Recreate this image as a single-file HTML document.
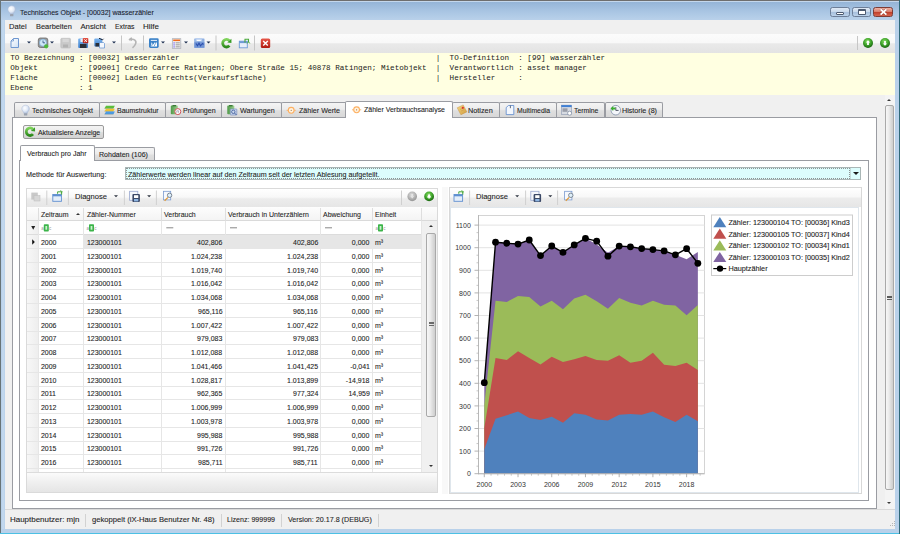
<!DOCTYPE html>
<html><head><meta charset="utf-8"><title>Technisches Objekt</title>
<style>
*{box-sizing:border-box}
html,body{margin:0;padding:0}
body{width:900px;height:534px;overflow:hidden;position:relative;background:#f0f0f0;font-family:"Liberation Sans",sans-serif;color:#1e1e1e}
.a{position:absolute}
.t{position:absolute;white-space:nowrap;line-height:10px;transform-origin:0 0;-webkit-text-stroke:0.1px currentColor}
.tr{transform-origin:100% 0}
.mono{font-family:"Liberation Mono",monospace;-webkit-text-stroke:0}
.tab{position:absolute;height:15px;border:1px solid #9a9ca2;border-bottom:none;border-radius:2px 2px 0 0;background:linear-gradient(#f4f4f4,#ececec 45%,#dfdfdf 55%,#d8d8d8)}
</style></head><body>
<div class="a" style="left:0;top:0;width:900px;height:1px;background:#6e6e6e"></div>
<div class="a" style="left:0;top:0;width:1px;height:534px;background:#687478"></div>
<div class="a" style="left:1px;top:20px;width:4.1px;height:514px;background:linear-gradient(90deg,#b4cde8,#c4daf0 50%,#b9d1ea)"></div>
<div class="a" style="left:894.8px;top:20px;width:3.8px;height:514px;background:#b9d1ea"></div>
<div class="a" style="left:898.5px;top:0;width:0.7px;height:534px;background:#62c6e8"></div>
<div class="a" style="left:899px;top:0;width:1px;height:534px;background:#2f6878"></div>
<div class="a" style="left:1px;top:1px;width:897.5px;height:19px;background:linear-gradient(#93b3d6,#a9c5e3 55%,#b9d1ea)"></div>
<div class="a" style="left:1px;top:1px;width:897.5px;height:1px;background:#c4d7ec"></div>
<div class="a" style="left:1px;top:529.3px;width:897.5px;height:4px;background:#b9d1ea"></div>
<div class="a" style="left:0;top:533px;width:899px;height:1px;background:#4cc0e4"></div>
<svg class="a" style="left:0;top:0" width="30" height="20" viewBox="0 0 30 20"><defs><radialGradient id="tb2" cx="0.4" cy="0.35" r="0.7"><stop offset="0" stop-color="#ffffff"/><stop offset="0.55" stop-color="#e2eaf6"/><stop offset="1" stop-color="#a3b5d4"/></radialGradient></defs><g transform="translate(-13.9,-99.4)"><path d="M25.6 105.2 C28 105.2 29.4 106.9 29.4 108.8 C29.4 110.4 28.2 111.3 27.6 112.4 L27.3 113.5 H23.9 L23.6 112.4 C23 111.3 21.8 110.4 21.8 108.8 C21.8 106.9 23.2 105.2 25.6 105.2 Z" fill="url(#tb2)" stroke="#aebcd6" stroke-width="0.5"/><rect x="23.9" y="113.3" width="3.4" height="2.4" rx="0.6" fill="#9aa2b0"/></g></svg>
<div class="t" style="left:19.80px;top:7.80px;font-size:7.8px;color:#1b2230;transform:scaleX(0.9001)">Technisches Objekt - [00032] wasserzähler</div>
<div class="a" style="left:830px;top:6.7px;width:20px;height:10.6px;border:1px solid #6d7e98;border-radius:2.5px;background:linear-gradient(#dfe9f5,#c9d9ec 45%,#a8c0dd 55%,#bcd2ea)"></div>
<div class="a" style="left:836.3px;top:12.2px;width:7.6px;height:2.8px;background:#fff;border:1px solid #4d5a70;border-radius:1px"></div>
<div class="a" style="left:852.2px;top:6.7px;width:19.2px;height:10.6px;border:1px solid #6d7e98;border-radius:2.5px;background:linear-gradient(#dfe9f5,#c9d9ec 45%,#a8c0dd 55%,#bcd2ea)"></div>
<div class="a" style="left:857.9px;top:9.4px;width:7.8px;height:5.4px;border:1px solid #4d5a70;border-top-width:2px;background:#fff;border-radius:1px"></div>
<div class="a" style="left:873.3px;top:6.7px;width:20px;height:10.6px;border:1px solid #7d3c36;border-radius:2.5px;background:linear-gradient(#eeb1a3,#d9806f 45%,#c2412c 55%,#d66550)"></div>
<svg class="a" style="left:873px;top:6px" width="21" height="12" viewBox="0 0 21 12"><path d="M7.6 3.4 L13.4 8.6 M13.4 3.4 L7.6 8.6" stroke="#6a2a22" stroke-width="3" stroke-opacity="0.45"/><path d="M7.6 3.4 L13.4 8.6 M13.4 3.4 L7.6 8.6" stroke="#fff" stroke-width="1.9"/></svg>
<div class="a" style="left:5px;top:20px;width:890px;height:13.8px;background:#f0f0f0"></div>
<div class="t" style="left:9.40px;top:22.20px;font-size:7.8px;color:#1e1e1e;transform:scaleX(0.9669)">Datei</div>
<div class="t" style="left:35.60px;top:22.20px;font-size:7.8px;color:#1e1e1e;transform:scaleX(0.9491)">Bearbeiten</div>
<div class="t" style="left:80.40px;top:22.20px;font-size:7.8px;color:#1e1e1e">Ansicht</div>
<div class="t" style="left:115.00px;top:22.20px;font-size:7.8px;color:#1e1e1e;transform:scaleX(0.8775)">Extras</div>
<div class="t" style="left:143.00px;top:22.20px;font-size:7.8px;color:#1e1e1e;transform:scaleX(1.0250)">Hilfe</div>
<div class="a" style="left:5px;top:33.8px;width:890px;height:18.9px;background:linear-gradient(#fcfcfc,#f8f8f8 45%,#e9e9e9 52%,#e3e3e3)"></div>
<svg class="a" style="left:0;top:0" width="900" height="534" viewBox="0 0 900 534">
<defs>
<linearGradient id="gdoc" x1="0" y1="0" x2="1" y2="1"><stop offset="0" stop-color="#ffffff"/><stop offset="1" stop-color="#cfe0f5"/></linearGradient>
<linearGradient id="gflop" x1="0" y1="0" x2="0" y2="1"><stop offset="0" stop-color="#7db5ee"/><stop offset="1" stop-color="#3d7fcc"/></linearGradient>
<linearGradient id="ggreen" x1="0" y1="0" x2="0" y2="1"><stop offset="0" stop-color="#7fd35a"/><stop offset="1" stop-color="#2d8a1c"/></linearGradient>
<radialGradient id="gball" cx="0.45" cy="0.35" r="0.6"><stop offset="0" stop-color="#8ee06a"/><stop offset="0.6" stop-color="#3fa52a"/><stop offset="1" stop-color="#1f6e14"/></radialGradient>
<linearGradient id="gred" x1="0" y1="0" x2="0" y2="1"><stop offset="0" stop-color="#e8584a"/><stop offset="1" stop-color="#b01a10"/></linearGradient>
</defs>
<!-- new doc -->
<path d="M13.5 38.5 H18.5 V47.5 H11 V41 Z" fill="url(#gdoc)" stroke="#6f97d0" stroke-width="1"/>
<path d="M13.5 38.5 V41 H11" fill="none" stroke="#6f97d0" stroke-width="0.8"/>
<path d="M27 41.5 h4 l-2 2 z" fill="#1d2f50"/>
<!-- clock -->
<rect x="38.3" y="38" width="9.5" height="9.5" rx="2" fill="#9a9a9a" stroke="#6a6a6a" stroke-width="0.8"/>
<circle cx="43" cy="42.7" r="3.6" fill="#cfe6f7" stroke="#6aa0cc" stroke-width="0.6"/>
<path d="M43 40.5 V42.8 H45" fill="none" stroke="#2a4e80" stroke-width="0.8"/>
<circle cx="46.2" cy="46.3" r="2.1" fill="#4cb83a"/>
<path d="M50 41.5 h4 l-2 2 z" fill="#1d2f50"/>
<!-- gray floppy -->
<rect x="60.8" y="38.3" width="9.7" height="9.7" rx="1" fill="#c9c9c9" stroke="#bdbdbd" stroke-width="0.6"/>
<rect x="62.5" y="39" width="6.3" height="3.2" fill="#d8d8d8"/>
<rect x="63" y="44.5" width="5" height="3" fill="#b3b3b3"/>
<!-- floppy red x -->
<rect x="78.2" y="38.5" width="9.8" height="9.5" rx="1" fill="url(#gflop)"/>
<rect x="80" y="44" width="6.5" height="4" fill="#2a2f38"/>
<rect x="80.5" y="39" width="3" height="3" fill="#e8f2fc"/>
<rect x="82.8" y="38" width="5.5" height="5.3" rx="0.8" fill="url(#gred)"/>
<path d="M84.2 39.4 L87 42 M87 39.4 L84.2 42" stroke="#fff" stroke-width="0.9"/>
<!-- floppy multiple -->
<rect x="94.3" y="38.5" width="8" height="8" rx="1" fill="url(#gflop)"/>
<rect x="95.5" y="43" width="5" height="3.5" fill="#2a2f38"/>
<path d="M99 38.3 l3.5 1.5 l1 -1" fill="none" stroke="#1d2333" stroke-width="1"/>
<path d="M99.5 42.5 H103.5 L104.5 43.5 V48 H99.5 Z" fill="#f4f8fd" stroke="#5f8fcf" stroke-width="0.7"/>
<path d="M112 41.5 h4 l-2 2 z" fill="#1d2f50"/>
<line x1="121.5" y1="35.5" x2="121.5" y2="50.5" stroke="#c6c6c6" stroke-width="1"/>
<!-- undo gray -->
<path d="M129 40 L131 38.5 L131.5 41 M130.2 39.6 C134 38.5 137 40.5 135.5 44 C134.8 45.8 133.5 47 132.5 47.8" fill="none" stroke="#b5b5b5" stroke-width="1.6"/>
<line x1="143.5" y1="35.5" x2="143.5" y2="50.5" stroke="#c6c6c6" stroke-width="1"/>
<!-- chart icon -->
<rect x="149" y="38.3" width="9.7" height="9.7" rx="1.4" fill="#3b82c8"/>
<rect x="150.8" y="39.9" width="6.2" height="0.9" fill="#ffffff"/>
<path d="M150.7 46.4 L151.6 42.3 L153.2 44.6 L154.8 42.3 L156.1 43.6 L157 41.6 V46.4 Z" fill="#ffffff"/>
<path d="M151.5 46.2 L152.9 43.2 M154.2 46.2 L155.5 43.2" stroke="#3b82c8" stroke-width="0.7"/>
<path d="M161 41.5 h4 l-2 2 z" fill="#1d2f50"/>
<!-- list icon -->
<rect x="172.3" y="38.7" width="8.5" height="9.6" fill="#f3f3f3" stroke="#a5a8b0" stroke-width="0.7"/>
<rect x="173.2" y="39.5" width="6.8" height="1.6" fill="#f06a1c"/>
<rect x="173.3" y="42.3" width="1.6" height="1.2" fill="#8a7ef0"/><rect x="175.6" y="42.4" width="4.2" height="0.9" fill="#8f8f8f"/>
<rect x="173.3" y="44.3" width="1.6" height="1.2" fill="#8a7ef0"/><rect x="175.6" y="44.4" width="4.2" height="0.9" fill="#8f8f8f"/>
<rect x="173.3" y="46.3" width="1.6" height="1.2" fill="#8a7ef0"/><rect x="175.6" y="46.4" width="4.2" height="0.9" fill="#8f8f8f"/>
<path d="M184 41.5 h4 l-2 2 z" fill="#1d2f50"/>
<!-- printer/report icon -->
<rect x="194.2" y="38.4" width="10.3" height="9.5" rx="0.6" fill="#8fb0e2"/>
<rect x="195.6" y="38.2" width="6.5" height="3" fill="#b9cff0"/>
<rect x="196.8" y="39.8" width="4" height="1.1" fill="#ffffff"/>
<rect x="194.4" y="42.2" width="10" height="5.5" fill="#6f93d4"/>
<path d="M196 43.5 L197.5 45.8 L199 43.2 L200.5 45.8 L202.5 43.5 L203.5 44.5" fill="none" stroke="#2c4fae" stroke-width="1.1"/>
<path d="M206.5 41.5 h4 l-2 2 z" fill="#1d2f50"/>
<line x1="216" y1="35.5" x2="216" y2="50.5" stroke="#c6c6c6" stroke-width="1"/>
<!-- refresh -->
<path d="M229.41 45.64 A3.8 3.8 0 1 1 229.32 40.66" fill="none" stroke="url(#ggreen)" stroke-width="2.8"/><path d="M231.40 38.78 L231.47 43.04 L227.24 42.53 Z" fill="#3a9e28"/>
<!-- window icon -->
<rect x="239.3" y="41.2" width="8" height="6.6" fill="#e6eefa" stroke="#6e9ad6" stroke-width="0.9"/>
<rect x="239.3" y="41.2" width="8" height="1.9" fill="#6e9ad6"/>
<path d="M245 42.4 V39.2 H248.5 V42.2" fill="none" stroke="#48a83a" stroke-width="1.1"/>
<path d="M247.2 43.5 L248.5 41.6 L249.8 43.5" fill="none" stroke="#48a83a" stroke-width="0.9"/>
<line x1="254.5" y1="35.5" x2="254.5" y2="50.5" stroke="#c6c6c6" stroke-width="1"/>
<!-- red x -->
<rect x="260.8" y="38.4" width="9.4" height="9.6" rx="1.5" fill="url(#gred)"/>
<path d="M263.2 40.9 L267.8 45.5 M267.8 40.9 L263.2 45.5" stroke="#fff" stroke-width="1.4"/>
<!-- right -->
<line x1="857.5" y1="36" x2="857.5" y2="50" stroke="#c6c6c6" stroke-width="1"/>
<circle cx="868" cy="43" r="5" fill="url(#gball)"/>
<path d="M868 40.3 L870.2 42.6 H868.9 V45 H867.1 V42.6 H865.8 Z" fill="#fff"/>
<circle cx="885" cy="43" r="5" fill="url(#gball)"/>
<path d="M885 45.7 L887.2 43.4 H885.9 V41 H884.1 V43.4 H882.8 Z" fill="#fff"/>
</svg>
<div class="a" style="left:5px;top:52.7px;width:889.8px;height:42.3px;background:#ffffe1"></div>
<div class="t mono" style="left:10.30px;top:53.20px;font-size:7.645px;color:#1a1a1a">TO Bezeichnung : [00032] wasserzähler                                                        |  TO-Definition  : [99] wasserzähler</div>
<div class="t mono" style="left:10.30px;top:63.15px;font-size:7.645px;color:#1a1a1a">Objekt         : [99001] Credo Carree Ratingen; Obere Straße 15; 40878 Ratingen; Mietobjekt  |  Verantwortlich : asset manager</div>
<div class="t mono" style="left:10.30px;top:73.10px;font-size:7.645px;color:#1a1a1a">Fläche         : [00002] Laden EG rechts(Verkaufsfläche)                                     |  Hersteller     :</div>
<div class="t mono" style="left:10.30px;top:83.05px;font-size:7.645px;color:#1a1a1a">Ebene          : 1</div>
<div class="a" style="left:5px;top:95px;width:890px;height:414.5px;background:#f0f0f0"></div>
<div class="a" style="left:884.7px;top:94.5px;width:10.3px;height:414.5px;background:#f4f4f4"></div>
<div class="a" style="left:884.7px;top:105.4px;width:9.6px;height:384.5px;border:1px solid #a9a9a9;border-radius:2px;background:linear-gradient(90deg,#f7f7f7,#ececec 40%,#d9d9d9 75%,#cecece)"></div>
<div class="a" style="left:887.2px;top:98.6px;width:0;height:0;border-left:2.6px solid transparent;border-right:2.6px solid transparent;border-bottom:2.6px solid #3a3a3a"></div>
<div class="a" style="left:887.2px;top:502.4px;width:0;height:0;border-left:2.6px solid transparent;border-right:2.6px solid transparent;border-top:2.6px solid #3a3a3a"></div>
<div class="a" style="left:887.2px;top:295.6px;width:4.5px;height:1px;background:#5a5a5a"></div>
<div class="a" style="left:887.2px;top:297.4px;width:4.5px;height:1px;background:#5a5a5a"></div>
<div class="a" style="left:887.2px;top:299.2px;width:4.5px;height:1px;background:#5a5a5a"></div>
<div class="tab" style="left:14.4px;top:102.3px;width:85.5px"></div>
<div class="tab" style="left:98.9px;top:102.3px;width:67.4px"></div>
<div class="tab" style="left:165.3px;top:102.3px;width:57.0px"></div>
<div class="tab" style="left:221.3px;top:102.3px;width:60.9px"></div>
<div class="tab" style="left:281.2px;top:102.3px;width:65.4px"></div>
<div class="tab" style="left:452.4px;top:102.3px;width:47.5px"></div>
<div class="tab" style="left:498.9px;top:102.3px;width:57.7px"></div>
<div class="tab" style="left:555.6px;top:102.3px;width:49.9px"></div>
<div class="tab" style="left:604.5px;top:102.3px;width:58.7px"></div>
<div class="t" style="left:32.20px;top:105.60px;font-size:7.8px;color:#1e1e1e;transform:scaleX(0.9022)">Technisches Objekt</div>
<div class="t" style="left:116.70px;top:105.60px;font-size:7.8px;color:#1e1e1e;transform:scaleX(0.8992)">Baumstruktur</div>
<div class="t" style="left:182.80px;top:105.60px;font-size:7.8px;color:#1e1e1e;transform:scaleX(0.9087)">Prüfungen</div>
<div class="t" style="left:240.00px;top:105.60px;font-size:7.8px;color:#1e1e1e;transform:scaleX(0.9165)">Wartungen</div>
<div class="t" style="left:299.00px;top:105.60px;font-size:7.8px;color:#1e1e1e;transform:scaleX(0.9127)">Zähler Werte</div>
<div class="t" style="left:468.30px;top:105.60px;font-size:7.8px;color:#1e1e1e;transform:scaleX(0.9343)">Notizen</div>
<div class="t" style="left:516.50px;top:105.60px;font-size:7.8px;color:#1e1e1e;transform:scaleX(0.8753)">Multimedia</div>
<div class="t" style="left:573.60px;top:105.60px;font-size:7.8px;color:#1e1e1e;transform:scaleX(0.8798)">Termine</div>
<div class="t" style="left:622.00px;top:105.60px;font-size:7.8px;color:#1e1e1e;transform:scaleX(0.9180)">Historie (8)</div>
<div class="a" style="left:12px;top:117.3px;width:864.8px;height:391.7px;background:#fff;border:1px solid #9a9ca2"></div>
<div class="a" style="left:345px;top:101.3px;width:108.4px;height:17.2px;background:#fff;border:1px solid #9a9ca2;border-bottom:none;border-radius:2px 2px 0 0"></div>
<div class="t" style="left:364.00px;top:105.40px;font-size:7.8px;color:#1e1e1e;transform:scaleX(0.8941)">Zähler Verbrauchsanalyse</div>
<svg class="a" style="left:0;top:0" width="900" height="534" viewBox="0 0 900 534">
<defs>
<radialGradient id="tbulb" cx="0.4" cy="0.35" r="0.7"><stop offset="0" stop-color="#ffffff"/><stop offset="0.55" stop-color="#dfe8f6"/><stop offset="1" stop-color="#9fb2d2"/></radialGradient>
<linearGradient id="tclip" x1="0" y1="0" x2="1" y2="0"><stop offset="0" stop-color="#4f9a48"/><stop offset="1" stop-color="#9ed08f"/></linearGradient>
<linearGradient id="tnote" x1="0" y1="0" x2="1" y2="1"><stop offset="0" stop-color="#f6dc8a"/><stop offset="1" stop-color="#d09a3a"/></linearGradient>
</defs>
<!-- bulb -->
<path d="M25.6 105.2 C28 105.2 29.4 106.9 29.4 108.8 C29.4 110.4 28.2 111.3 27.6 112.4 L27.3 113.5 H23.9 L23.6 112.4 C23 111.3 21.8 110.4 21.8 108.8 C21.8 106.9 23.2 105.2 25.6 105.2 Z" fill="url(#tbulb)" stroke="#aebcd6" stroke-width="0.5"/>
<rect x="23.9" y="113.3" width="3.4" height="2.2" rx="0.6" fill="#9aa2b0"/>
<!-- layers -->
<path d="M106 105.8 H114.9 L113.4 108.4 H104.5 Z" fill="#5cbf3c"/>
<path d="M106 108.7 H114.9 L113.4 111.3 H104.5 Z" fill="#f3c433"/>
<path d="M106 111.6 H114.9 L113.4 114.2 H104.5 Z" fill="#4a9be6"/>
<path d="M104.5 108.4 H113.4 M104.5 111.3 H113.4 M104.5 114.2 H113.4" stroke="#6c7a5a" stroke-width="0.3"/>
<!-- pruefungen -->
<rect x="170.8" y="105.6" width="7" height="8.6" rx="0.8" fill="url(#tclip)"/>
<rect x="172.5" y="105" width="3.6" height="1.4" fill="#3d7a38"/>
<circle cx="177.8" cy="111.6" r="3" fill="#fff" stroke="#d0545a" stroke-width="1"/>
<path d="M176.8 112.8 V110.8 H178.6 V112.8" fill="none" stroke="#6a6a8a" stroke-width="0.5"/>
<!-- wartungen -->
<rect x="227.3" y="105.6" width="7" height="8.6" rx="0.8" fill="url(#tclip)"/>
<rect x="229" y="105" width="3.6" height="1.4" fill="#3d7a38"/>
<rect x="230.3" y="109" width="6.5" height="6" rx="0.5" fill="#c9d6ec" stroke="#6a82b8" stroke-width="0.6"/>
<circle cx="233.3" cy="111.8" r="1.7" fill="none" stroke="#3c5a98" stroke-width="0.8"/>
<line x1="234.5" y1="113" x2="236.5" y2="115" stroke="#3c5a98" stroke-width="0.9"/>
<!-- zaehler werte -->
<circle cx="291.2" cy="110.3" r="2.9" fill="#fff3e0" stroke="#fdb062" stroke-width="1.1"/>
<circle cx="291.2" cy="110.3" r="0.6" fill="#a07040"/>
<line x1="286.6" y1="110.3" x2="288.2" y2="110.3" stroke="#fdb062" stroke-width="0.9"/>
<line x1="294.2" y1="110.3" x2="295.8" y2="110.3" stroke="#fdb062" stroke-width="0.9"/>
<!-- verbrauchsanalyse -->
<circle cx="356.6" cy="109.8" r="2.9" fill="#fff3e0" stroke="#fdb062" stroke-width="1.1"/>
<circle cx="356.6" cy="109.8" r="0.6" fill="#a07040"/>
<line x1="352" y1="109.8" x2="353.6" y2="109.8" stroke="#fdb062" stroke-width="0.9"/>
<line x1="359.6" y1="109.8" x2="361.2" y2="109.8" stroke="#fdb062" stroke-width="0.9"/>
<!-- notizen -->
<path d="M457.2 107.8 L463.2 104.9 L466.9 111.9 L460.9 114.8 Z" fill="url(#tnote)" stroke="#c08838" stroke-width="0.4"/>
<path d="M460 109.5 L463.5 107.8 M460.8 111.2 L464.3 109.5" stroke="#c89040" stroke-width="0.5"/>
<circle cx="462.8" cy="107.8" r="1.1" fill="#e0302a"/>
<!-- multimedia -->
<path d="M506.2 107.5 L508.5 105.5 H513.8 V114.6 H506.2 Z" fill="#f3f7fd" stroke="#5a88cc" stroke-width="0.8"/>
<path d="M510.4 105.6 V108.2" stroke="#404a5a" stroke-width="0.8"/>
<!-- termine -->
<rect x="561.3" y="105.1" width="10.3" height="9.6" fill="#d7dbe2" stroke="#7c8aa6" stroke-width="0.5"/>
<rect x="561.3" y="105.1" width="10.3" height="2" fill="#3f7fd4"/>
<rect x="562.5" y="108.3" width="5" height="3.5" fill="#9a9ea8"/>
<circle cx="569.6" cy="113.2" r="2" fill="#fff" stroke="#6a7890" stroke-width="0.6"/>
<!-- historie -->
<circle cx="615.8" cy="110.2" r="4.8" fill="#f4f6fa" stroke="#8290a8" stroke-width="0.8"/>
<path d="M615.8 107.2 V110.4 H618.6" fill="none" stroke="#2a3444" stroke-width="0.8"/>
<path d="M610.6 108.6 L613.2 106 L613.2 107.5 L615.4 107.5 L615.4 109.6 L613.2 109.6 L613.2 111.1 Z" fill="#3bb02e"/>
</svg>

<div class="a" style="left:22.8px;top:124.9px;width:80.8px;height:13.9px;border:1px solid #9a9a9a;border-radius:2px;background:linear-gradient(#f3f3f3,#ebebeb 45%,#dddddd 55%,#d2d2d2)"></div>
<div class="t" style="left:37.80px;top:127.70px;font-size:7.8px;color:#1e1e1e;transform:scaleX(0.8858)">Aktualisiere Anzeige</div>
<div class="tab" style="left:94.3px;top:147.2px;width:61px;height:14px"></div>
<div class="t" style="left:99.00px;top:150.30px;font-size:7.8px;color:#1e1e1e;transform:scaleX(0.9024)">Rohdaten (106)</div>
<div class="a" style="left:19px;top:160px;width:849.7px;height:341.2px;border:1px solid #9a9ca2;background:#fff"></div>
<div class="a" style="left:20.1px;top:145.3px;width:74.5px;height:15.5px;border:1px solid #9a9ca2;border-bottom:none;border-radius:2px 2px 0 0;background:#fff"></div>
<div class="t" style="left:27.20px;top:149.30px;font-size:7.8px;color:#1e1e1e;transform:scaleX(0.8973)">Verbrauch pro Jahr</div>
<div class="t" style="left:25.70px;top:169.50px;font-size:7.8px;color:#1e1e1e;transform:scaleX(0.9275)">Methode für Auswertung:</div>
<div class="a" style="left:125px;top:167.2px;width:736.3px;height:13px;background:#dcfdfd;border:1px solid #a9b6b6"></div>
<div class="a" style="left:126.2px;top:168.4px;width:723.4px;height:10.6px;border:1px dotted #8c9494"></div>
<div class="a" style="left:849.6px;top:168.2px;width:10.8px;height:11px;background:#dcfdfd;border-left:1px solid #c5dada"></div>
<div class="a" style="left:853.4px;top:172.4px;width:0;height:0;border-left:3px solid transparent;border-right:3px solid transparent;border-top:3px solid #1a1a1a"></div>
<div class="t" style="left:127.50px;top:169.60px;font-size:7.8px;color:#1e1e1e;transform:scaleX(0.9163)">Zählerwerte werden linear auf den Zeitraum seit der letzten Ablesung aufgeteilt.</div>
<div class="a" style="left:26.1px;top:188.2px;width:411.8px;height:304.6px;border:1px solid #dadada;background:#fff"></div>
<div class="a" style="left:27.1px;top:189.2px;width:410.3px;height:18px;background:linear-gradient(#ffffff,#f8f8f8 45%,#ececec 55%,#e6e6e6)"></div>
<div class="t" style="left:74.70px;top:192.00px;font-size:7.8px;color:#1e1e1e;transform:scaleX(0.9711)">Diagnose</div>
<div class="a" style="left:27.1px;top:207.2px;width:410.3px;height:14px;background:linear-gradient(#fdfdfd,#f4f4f4);border-bottom:1px solid #dadada"></div>
<div class="a" style="left:38px;top:207.5px;width:1px;height:13.7px;background:#dedede"></div>
<div class="a" style="left:83px;top:207.5px;width:1px;height:13.7px;background:#dedede"></div>
<div class="a" style="left:161px;top:207.5px;width:1px;height:13.7px;background:#dedede"></div>
<div class="a" style="left:225px;top:207.5px;width:1px;height:13.7px;background:#dedede"></div>
<div class="a" style="left:320px;top:207.5px;width:1px;height:13.7px;background:#dedede"></div>
<div class="a" style="left:372px;top:207.5px;width:1px;height:13.7px;background:#dedede"></div>
<div class="a" style="left:421px;top:207.5px;width:1px;height:13.7px;background:#dedede"></div>
<div class="t" style="left:40.80px;top:209.80px;font-size:8.1px;color:#1e1e1e;transform:scaleX(0.8600)">Zeitraum</div>
<div class="t" style="left:86.50px;top:209.80px;font-size:8.1px;color:#1e1e1e;transform:scaleX(0.8600)">Zähler-Nummer</div>
<div class="t" style="left:164.00px;top:209.80px;font-size:8.1px;color:#1e1e1e;transform:scaleX(0.8600)">Verbrauch</div>
<div class="t" style="left:227.80px;top:209.80px;font-size:8.1px;color:#1e1e1e;transform:scaleX(0.8600)">Verbrauch in Unterzählern</div>
<div class="t" style="left:323.30px;top:209.80px;font-size:8.1px;color:#1e1e1e;transform:scaleX(0.8600)">Abweichung</div>
<div class="t" style="left:375.10px;top:209.80px;font-size:8.1px;color:#1e1e1e;transform:scaleX(0.8600)">Einheit</div>
<div class="a" style="left:76px;top:212.8px;width:0;height:0;border-left:2.2px solid transparent;border-right:2.2px solid transparent;border-bottom:2.2px solid #333"></div>
<div class="a" style="left:27.1px;top:221.2px;width:11.3px;height:251px;background:linear-gradient(90deg,#f7f7f7,#eeeeee)"></div>
<div class="a" style="left:27.1px;top:234.3px;width:396px;height:1px;background:#dcdcdc"></div>
<div class="a" style="left:84px;top:235.30px;width:338px;height:12.76px;background:#e6e6e6"></div>
<div class="a" style="left:27.1px;top:248.06px;width:396px;height:1px;background:#e6e6e6"></div>
<div class="a" style="left:27.1px;top:261.82px;width:396px;height:1px;background:#e6e6e6"></div>
<div class="a" style="left:27.1px;top:275.58px;width:396px;height:1px;background:#e6e6e6"></div>
<div class="a" style="left:27.1px;top:289.34px;width:396px;height:1px;background:#e6e6e6"></div>
<div class="a" style="left:27.1px;top:303.10px;width:396px;height:1px;background:#e6e6e6"></div>
<div class="a" style="left:27.1px;top:316.86px;width:396px;height:1px;background:#e6e6e6"></div>
<div class="a" style="left:27.1px;top:330.62px;width:396px;height:1px;background:#e6e6e6"></div>
<div class="a" style="left:27.1px;top:344.38px;width:396px;height:1px;background:#e6e6e6"></div>
<div class="a" style="left:27.1px;top:358.14px;width:396px;height:1px;background:#e6e6e6"></div>
<div class="a" style="left:27.1px;top:371.90px;width:396px;height:1px;background:#e6e6e6"></div>
<div class="a" style="left:27.1px;top:385.66px;width:396px;height:1px;background:#e6e6e6"></div>
<div class="a" style="left:27.1px;top:399.42px;width:396px;height:1px;background:#e6e6e6"></div>
<div class="a" style="left:27.1px;top:413.18px;width:396px;height:1px;background:#e6e6e6"></div>
<div class="a" style="left:27.1px;top:426.94px;width:396px;height:1px;background:#e6e6e6"></div>
<div class="a" style="left:27.1px;top:440.70px;width:396px;height:1px;background:#e6e6e6"></div>
<div class="a" style="left:27.1px;top:454.46px;width:396px;height:1px;background:#e6e6e6"></div>
<div class="a" style="left:27.1px;top:468.22px;width:396px;height:1px;background:#e6e6e6"></div>
<div class="a" style="left:27.1px;top:481.98px;width:396px;height:1px;background:#e6e6e6"></div>
<div class="a" style="left:38px;top:221.2px;width:1px;height:251px;background:#e6e6e6"></div>
<div class="a" style="left:83px;top:221.2px;width:1px;height:251px;background:#e6e6e6"></div>
<div class="a" style="left:161px;top:221.2px;width:1px;height:251px;background:#e6e6e6"></div>
<div class="a" style="left:225px;top:221.2px;width:1px;height:251px;background:#e6e6e6"></div>
<div class="a" style="left:320px;top:221.2px;width:1px;height:251px;background:#e6e6e6"></div>
<div class="a" style="left:372px;top:221.2px;width:1px;height:251px;background:#e6e6e6"></div>
<div class="a" style="left:421px;top:221.2px;width:1px;height:251px;background:#e6e6e6"></div>
<div class="t" style="left:40.80px;top:238.00px;font-size:8.1px;color:#1e1e1e;transform:scaleX(0.8600)">2000</div>
<div class="t" style="left:87.20px;top:238.00px;font-size:8.1px;color:#1e1e1e;transform:scaleX(0.8600)">123000101</div>
<div class="t tr" style="left:193.03px;top:238.00px;font-size:8.1px;color:#1e1e1e;transform:scaleX(0.8600)">402,806</div>
<div class="t tr" style="left:288.53px;top:238.00px;font-size:8.1px;color:#1e1e1e;transform:scaleX(0.8600)">402,806</div>
<div class="t tr" style="left:349.33px;top:238.00px;font-size:8.1px;color:#1e1e1e;transform:scaleX(0.8600)">0,000</div>
<div class="t" style="left:375.10px;top:238.00px;font-size:8.1px;color:#1e1e1e;transform:scaleX(0.8600)">m³</div>
<div class="t" style="left:40.80px;top:251.76px;font-size:8.1px;color:#1e1e1e;transform:scaleX(0.8600)">2001</div>
<div class="t" style="left:87.20px;top:251.76px;font-size:8.1px;color:#1e1e1e;transform:scaleX(0.8600)">123000101</div>
<div class="t tr" style="left:186.28px;top:251.76px;font-size:8.1px;color:#1e1e1e;transform:scaleX(0.8600)">1.024,238</div>
<div class="t tr" style="left:281.78px;top:251.76px;font-size:8.1px;color:#1e1e1e;transform:scaleX(0.8600)">1.024,238</div>
<div class="t tr" style="left:349.33px;top:251.76px;font-size:8.1px;color:#1e1e1e;transform:scaleX(0.8600)">0,000</div>
<div class="t" style="left:375.10px;top:251.76px;font-size:8.1px;color:#1e1e1e;transform:scaleX(0.8600)">m³</div>
<div class="t" style="left:40.80px;top:265.52px;font-size:8.1px;color:#1e1e1e;transform:scaleX(0.8600)">2002</div>
<div class="t" style="left:87.20px;top:265.52px;font-size:8.1px;color:#1e1e1e;transform:scaleX(0.8600)">123000101</div>
<div class="t tr" style="left:186.28px;top:265.52px;font-size:8.1px;color:#1e1e1e;transform:scaleX(0.8600)">1.019,740</div>
<div class="t tr" style="left:281.78px;top:265.52px;font-size:8.1px;color:#1e1e1e;transform:scaleX(0.8600)">1.019,740</div>
<div class="t tr" style="left:349.33px;top:265.52px;font-size:8.1px;color:#1e1e1e;transform:scaleX(0.8600)">0,000</div>
<div class="t" style="left:375.10px;top:265.52px;font-size:8.1px;color:#1e1e1e;transform:scaleX(0.8600)">m³</div>
<div class="t" style="left:40.80px;top:279.28px;font-size:8.1px;color:#1e1e1e;transform:scaleX(0.8600)">2003</div>
<div class="t" style="left:87.20px;top:279.28px;font-size:8.1px;color:#1e1e1e;transform:scaleX(0.8600)">123000101</div>
<div class="t tr" style="left:186.28px;top:279.28px;font-size:8.1px;color:#1e1e1e;transform:scaleX(0.8600)">1.016,042</div>
<div class="t tr" style="left:281.78px;top:279.28px;font-size:8.1px;color:#1e1e1e;transform:scaleX(0.8600)">1.016,042</div>
<div class="t tr" style="left:349.33px;top:279.28px;font-size:8.1px;color:#1e1e1e;transform:scaleX(0.8600)">0,000</div>
<div class="t" style="left:375.10px;top:279.28px;font-size:8.1px;color:#1e1e1e;transform:scaleX(0.8600)">m³</div>
<div class="t" style="left:40.80px;top:293.04px;font-size:8.1px;color:#1e1e1e;transform:scaleX(0.8600)">2004</div>
<div class="t" style="left:87.20px;top:293.04px;font-size:8.1px;color:#1e1e1e;transform:scaleX(0.8600)">123000101</div>
<div class="t tr" style="left:186.28px;top:293.04px;font-size:8.1px;color:#1e1e1e;transform:scaleX(0.8600)">1.034,068</div>
<div class="t tr" style="left:281.78px;top:293.04px;font-size:8.1px;color:#1e1e1e;transform:scaleX(0.8600)">1.034,068</div>
<div class="t tr" style="left:349.33px;top:293.04px;font-size:8.1px;color:#1e1e1e;transform:scaleX(0.8600)">0,000</div>
<div class="t" style="left:375.10px;top:293.04px;font-size:8.1px;color:#1e1e1e;transform:scaleX(0.8600)">m³</div>
<div class="t" style="left:40.80px;top:306.80px;font-size:8.1px;color:#1e1e1e;transform:scaleX(0.8600)">2005</div>
<div class="t" style="left:87.20px;top:306.80px;font-size:8.1px;color:#1e1e1e;transform:scaleX(0.8600)">123000101</div>
<div class="t tr" style="left:193.64px;top:306.80px;font-size:8.1px;color:#1e1e1e;transform:scaleX(0.8600)">965,116</div>
<div class="t tr" style="left:289.14px;top:306.80px;font-size:8.1px;color:#1e1e1e;transform:scaleX(0.8600)">965,116</div>
<div class="t tr" style="left:349.33px;top:306.80px;font-size:8.1px;color:#1e1e1e;transform:scaleX(0.8600)">0,000</div>
<div class="t" style="left:375.10px;top:306.80px;font-size:8.1px;color:#1e1e1e;transform:scaleX(0.8600)">m³</div>
<div class="t" style="left:40.80px;top:320.56px;font-size:8.1px;color:#1e1e1e;transform:scaleX(0.8600)">2006</div>
<div class="t" style="left:87.20px;top:320.56px;font-size:8.1px;color:#1e1e1e;transform:scaleX(0.8600)">123000101</div>
<div class="t tr" style="left:186.28px;top:320.56px;font-size:8.1px;color:#1e1e1e;transform:scaleX(0.8600)">1.007,422</div>
<div class="t tr" style="left:281.78px;top:320.56px;font-size:8.1px;color:#1e1e1e;transform:scaleX(0.8600)">1.007,422</div>
<div class="t tr" style="left:349.33px;top:320.56px;font-size:8.1px;color:#1e1e1e;transform:scaleX(0.8600)">0,000</div>
<div class="t" style="left:375.10px;top:320.56px;font-size:8.1px;color:#1e1e1e;transform:scaleX(0.8600)">m³</div>
<div class="t" style="left:40.80px;top:334.32px;font-size:8.1px;color:#1e1e1e;transform:scaleX(0.8600)">2007</div>
<div class="t" style="left:87.20px;top:334.32px;font-size:8.1px;color:#1e1e1e;transform:scaleX(0.8600)">123000101</div>
<div class="t tr" style="left:193.03px;top:334.32px;font-size:8.1px;color:#1e1e1e;transform:scaleX(0.8600)">979,083</div>
<div class="t tr" style="left:288.53px;top:334.32px;font-size:8.1px;color:#1e1e1e;transform:scaleX(0.8600)">979,083</div>
<div class="t tr" style="left:349.33px;top:334.32px;font-size:8.1px;color:#1e1e1e;transform:scaleX(0.8600)">0,000</div>
<div class="t" style="left:375.10px;top:334.32px;font-size:8.1px;color:#1e1e1e;transform:scaleX(0.8600)">m³</div>
<div class="t" style="left:40.80px;top:348.08px;font-size:8.1px;color:#1e1e1e;transform:scaleX(0.8600)">2008</div>
<div class="t" style="left:87.20px;top:348.08px;font-size:8.1px;color:#1e1e1e;transform:scaleX(0.8600)">123000101</div>
<div class="t tr" style="left:186.28px;top:348.08px;font-size:8.1px;color:#1e1e1e;transform:scaleX(0.8600)">1.012,088</div>
<div class="t tr" style="left:281.78px;top:348.08px;font-size:8.1px;color:#1e1e1e;transform:scaleX(0.8600)">1.012,088</div>
<div class="t tr" style="left:349.33px;top:348.08px;font-size:8.1px;color:#1e1e1e;transform:scaleX(0.8600)">0,000</div>
<div class="t" style="left:375.10px;top:348.08px;font-size:8.1px;color:#1e1e1e;transform:scaleX(0.8600)">m³</div>
<div class="t" style="left:40.80px;top:361.84px;font-size:8.1px;color:#1e1e1e;transform:scaleX(0.8600)">2009</div>
<div class="t" style="left:87.20px;top:361.84px;font-size:8.1px;color:#1e1e1e;transform:scaleX(0.8600)">123000101</div>
<div class="t tr" style="left:186.28px;top:361.84px;font-size:8.1px;color:#1e1e1e;transform:scaleX(0.8600)">1.041,466</div>
<div class="t tr" style="left:281.78px;top:361.84px;font-size:8.1px;color:#1e1e1e;transform:scaleX(0.8600)">1.041,425</div>
<div class="t tr" style="left:346.65px;top:361.84px;font-size:8.1px;color:#1e1e1e;transform:scaleX(0.8600)">-0,041</div>
<div class="t" style="left:375.10px;top:361.84px;font-size:8.1px;color:#1e1e1e;transform:scaleX(0.8600)">m³</div>
<div class="t" style="left:40.80px;top:375.60px;font-size:8.1px;color:#1e1e1e;transform:scaleX(0.8600)">2010</div>
<div class="t" style="left:87.20px;top:375.60px;font-size:8.1px;color:#1e1e1e;transform:scaleX(0.8600)">123000101</div>
<div class="t tr" style="left:186.28px;top:375.60px;font-size:8.1px;color:#1e1e1e;transform:scaleX(0.8600)">1.028,817</div>
<div class="t tr" style="left:281.78px;top:375.60px;font-size:8.1px;color:#1e1e1e;transform:scaleX(0.8600)">1.013,899</div>
<div class="t tr" style="left:342.15px;top:375.60px;font-size:8.1px;color:#1e1e1e;transform:scaleX(0.8600)">-14,918</div>
<div class="t" style="left:375.10px;top:375.60px;font-size:8.1px;color:#1e1e1e;transform:scaleX(0.8600)">m³</div>
<div class="t" style="left:40.80px;top:389.36px;font-size:8.1px;color:#1e1e1e;transform:scaleX(0.8600)">2011</div>
<div class="t" style="left:87.20px;top:389.36px;font-size:8.1px;color:#1e1e1e;transform:scaleX(0.8600)">123000101</div>
<div class="t tr" style="left:193.03px;top:389.36px;font-size:8.1px;color:#1e1e1e;transform:scaleX(0.8600)">962,365</div>
<div class="t tr" style="left:288.53px;top:389.36px;font-size:8.1px;color:#1e1e1e;transform:scaleX(0.8600)">977,324</div>
<div class="t tr" style="left:344.83px;top:389.36px;font-size:8.1px;color:#1e1e1e;transform:scaleX(0.8600)">14,959</div>
<div class="t" style="left:375.10px;top:389.36px;font-size:8.1px;color:#1e1e1e;transform:scaleX(0.8600)">m³</div>
<div class="t" style="left:40.80px;top:403.12px;font-size:8.1px;color:#1e1e1e;transform:scaleX(0.8600)">2012</div>
<div class="t" style="left:87.20px;top:403.12px;font-size:8.1px;color:#1e1e1e;transform:scaleX(0.8600)">123000101</div>
<div class="t tr" style="left:186.28px;top:403.12px;font-size:8.1px;color:#1e1e1e;transform:scaleX(0.8600)">1.006,999</div>
<div class="t tr" style="left:281.78px;top:403.12px;font-size:8.1px;color:#1e1e1e;transform:scaleX(0.8600)">1.006,999</div>
<div class="t tr" style="left:349.33px;top:403.12px;font-size:8.1px;color:#1e1e1e;transform:scaleX(0.8600)">0,000</div>
<div class="t" style="left:375.10px;top:403.12px;font-size:8.1px;color:#1e1e1e;transform:scaleX(0.8600)">m³</div>
<div class="t" style="left:40.80px;top:416.88px;font-size:8.1px;color:#1e1e1e;transform:scaleX(0.8600)">2013</div>
<div class="t" style="left:87.20px;top:416.88px;font-size:8.1px;color:#1e1e1e;transform:scaleX(0.8600)">123000101</div>
<div class="t tr" style="left:186.28px;top:416.88px;font-size:8.1px;color:#1e1e1e;transform:scaleX(0.8600)">1.003,978</div>
<div class="t tr" style="left:281.78px;top:416.88px;font-size:8.1px;color:#1e1e1e;transform:scaleX(0.8600)">1.003,978</div>
<div class="t tr" style="left:349.33px;top:416.88px;font-size:8.1px;color:#1e1e1e;transform:scaleX(0.8600)">0,000</div>
<div class="t" style="left:375.10px;top:416.88px;font-size:8.1px;color:#1e1e1e;transform:scaleX(0.8600)">m³</div>
<div class="t" style="left:40.80px;top:430.64px;font-size:8.1px;color:#1e1e1e;transform:scaleX(0.8600)">2014</div>
<div class="t" style="left:87.20px;top:430.64px;font-size:8.1px;color:#1e1e1e;transform:scaleX(0.8600)">123000101</div>
<div class="t tr" style="left:193.03px;top:430.64px;font-size:8.1px;color:#1e1e1e;transform:scaleX(0.8600)">995,988</div>
<div class="t tr" style="left:288.53px;top:430.64px;font-size:8.1px;color:#1e1e1e;transform:scaleX(0.8600)">995,988</div>
<div class="t tr" style="left:349.33px;top:430.64px;font-size:8.1px;color:#1e1e1e;transform:scaleX(0.8600)">0,000</div>
<div class="t" style="left:375.10px;top:430.64px;font-size:8.1px;color:#1e1e1e;transform:scaleX(0.8600)">m³</div>
<div class="t" style="left:40.80px;top:444.40px;font-size:8.1px;color:#1e1e1e;transform:scaleX(0.8600)">2015</div>
<div class="t" style="left:87.20px;top:444.40px;font-size:8.1px;color:#1e1e1e;transform:scaleX(0.8600)">123000101</div>
<div class="t tr" style="left:193.03px;top:444.40px;font-size:8.1px;color:#1e1e1e;transform:scaleX(0.8600)">991,726</div>
<div class="t tr" style="left:288.53px;top:444.40px;font-size:8.1px;color:#1e1e1e;transform:scaleX(0.8600)">991,726</div>
<div class="t tr" style="left:349.33px;top:444.40px;font-size:8.1px;color:#1e1e1e;transform:scaleX(0.8600)">0,000</div>
<div class="t" style="left:375.10px;top:444.40px;font-size:8.1px;color:#1e1e1e;transform:scaleX(0.8600)">m³</div>
<div class="t" style="left:40.80px;top:458.16px;font-size:8.1px;color:#1e1e1e;transform:scaleX(0.8600)">2016</div>
<div class="t" style="left:87.20px;top:458.16px;font-size:8.1px;color:#1e1e1e;transform:scaleX(0.8600)">123000101</div>
<div class="t tr" style="left:193.64px;top:458.16px;font-size:8.1px;color:#1e1e1e;transform:scaleX(0.8600)">985,711</div>
<div class="t tr" style="left:289.14px;top:458.16px;font-size:8.1px;color:#1e1e1e;transform:scaleX(0.8600)">985,711</div>
<div class="t tr" style="left:349.33px;top:458.16px;font-size:8.1px;color:#1e1e1e;transform:scaleX(0.8600)">0,000</div>
<div class="t" style="left:375.10px;top:458.16px;font-size:8.1px;color:#1e1e1e;transform:scaleX(0.8600)">m³</div>
<div class="a" style="left:27.1px;top:472.1px;width:410.3px;height:19.7px;background:linear-gradient(#fbfbfb,#efefef 50%,#e5e5e5);border-top:1px solid #dcdcdc"></div>
<div class="a" style="left:422.4px;top:221.2px;width:15px;height:250.9px;background:#f0f0f0"></div>
<div class="a" style="left:426.3px;top:232.6px;width:9.8px;height:184.6px;border:1px solid #a9a9a9;border-radius:2px;background:linear-gradient(90deg,#f7f7f7,#ececec 40%,#d9d9d9 75%,#cecece)"></div>
<div class="a" style="left:428.8px;top:225.2px;width:0;height:0;border-left:2.5px solid transparent;border-right:2.5px solid transparent;border-bottom:2.5px solid #333"></div>
<div class="a" style="left:428.8px;top:464.7px;width:0;height:0;border-left:2.5px solid transparent;border-right:2.5px solid transparent;border-top:2.5px solid #333"></div>
<div class="a" style="left:429px;top:321.5px;width:4.5px;height:1px;background:#6a6a6a"></div>
<div class="a" style="left:429px;top:323.3px;width:4.5px;height:1px;background:#6a6a6a"></div>
<div class="a" style="left:429px;top:325.1px;width:4.5px;height:1px;background:#6a6a6a"></div>
<div class="a" style="left:441.5px;top:186.5px;width:6px;height:307px;background:#f8f8f8"></div>
<div class="a" style="left:449px;top:186.6px;width:413px;height:307px;border:1px solid #d8d8d8;background:#fff"></div>
<div class="a" style="left:450px;top:187.6px;width:411px;height:19px;background:linear-gradient(#ffffff,#f8f8f8 45%,#ececec 55%,#e6e6e6)"></div>
<div class="a" style="left:450.3px;top:207.3px;width:409px;height:286px;border:1px solid #dfe6ec;background:#fff"></div>
<div class="t" style="left:475.70px;top:191.80px;font-size:7.8px;color:#1e1e1e;transform:scaleX(0.9711)">Diagnose</div>
<svg class="a" style="left:0;top:0;z-index:1" width="900" height="534" viewBox="0 0 900 534">
<defs>
<linearGradient id="gg2" x1="0" y1="0" x2="0" y2="1"><stop offset="0" stop-color="#7fd35a"/><stop offset="1" stop-color="#2d8a1c"/></linearGradient>
<radialGradient id="gball2" cx="0.45" cy="0.35" r="0.6"><stop offset="0" stop-color="#8ee06a"/><stop offset="0.6" stop-color="#3fa52a"/><stop offset="1" stop-color="#1f6e14"/></radialGradient>
<radialGradient id="ggray" cx="0.45" cy="0.35" r="0.6"><stop offset="0" stop-color="#e0e0e0"/><stop offset="1" stop-color="#9a9a9a"/></radialGradient>
</defs>
<!-- refresh in button -->
<path d="M33.01 134.14 A3.8 3.8 0 1 1 32.92 129.16" fill="none" stroke="url(#gg2)" stroke-width="2.8"/><path d="M35.00 127.28 L35.07 131.54 L30.84 131.03 Z" fill="#3a9e28"/>
<!-- grid toolbar -->
<rect x="31.3" y="192.6" width="6.5" height="7" fill="#c8c8c8"/>
<rect x="34" y="195.5" width="6" height="5.5" fill="#d6d6d6" stroke="#bcbcbc" stroke-width="0.5"/>
<line x1="46.8" y1="190.5" x2="46.8" y2="205" stroke="#d0d0d0"/>
<rect x="52.8" y="194.5" width="8.6" height="6.8" fill="#e4eefa" stroke="#5f8fd0" stroke-width="0.9"/>
<rect x="52.8" y="194.5" width="8.6" height="1.8" fill="#5f8fd0"/>
<path d="M57.6 193.8 V191.8 H61.6 V194.6" fill="none" stroke="#48a83a" stroke-width="1"/>
<path d="M60.2 190.6 L62.4 191.8 L60.8 193.2" fill="none" stroke="#48a83a" stroke-width="0.8"/>
<line x1="68.4" y1="190.5" x2="68.4" y2="205" stroke="#d0d0d0"/>
<path d="M114 195.2 h4 l-2 2 z" fill="#2e3440"/>
<line x1="124.4" y1="190.5" x2="124.4" y2="205" stroke="#d0d0d0"/>
<rect x="129.6" y="191.3" width="8.2" height="9" fill="#f4f6fb" stroke="#9aa8d0" stroke-width="0.8"/>
<rect x="132.4" y="194.1" width="7.5" height="7.8" rx="1" fill="#3b4866"/>
<rect x="134" y="195.2" width="4.3" height="2.8" fill="#ffffff"/>
<rect x="134" y="199" width="4.3" height="2.4" fill="#8db4e0"/>
<path d="M147.1 195.2 h4 l-2 2 z" fill="#2e3440"/>
<line x1="156.4" y1="190.5" x2="156.4" y2="205" stroke="#d0d0d0"/>
<rect x="163.4" y="191.3" width="7.3" height="8.6" fill="#f7f9fd" stroke="#7b9bd0" stroke-width="0.8"/>
<line x1="168" y1="197.4" x2="164.6" y2="200.8" stroke="#e09a3a" stroke-width="1.3"/>
<circle cx="169.6" cy="195.3" r="2.2" fill="#dff0fa" stroke="#707a88" stroke-width="0.9"/>
<line x1="401.5" y1="190.5" x2="401.5" y2="205" stroke="#d0d0d0"/>
<circle cx="412.2" cy="196.4" r="4.8" fill="url(#ggray)"/>
<path d="M412.2 198.6 L414 196 H410.4 Z M411.5 194 H412.9 V196.2 H411.5 Z" fill="#e8e8e8"/>
<circle cx="429.1" cy="196.4" r="4.9" fill="url(#gball2)"/>
<path d="M429.1 193.6 L431.3 197.4 H426.9 Z M428.3 197 H429.9 V198.6 H428.3 Z" fill="#fff"/>
<!-- chart toolbar -->
<g transform="translate(401.2,0)">
<rect x="52.8" y="194.5" width="8.6" height="6.8" fill="#e4eefa" stroke="#5f8fd0" stroke-width="0.9"/>
<rect x="52.8" y="194.5" width="8.6" height="1.8" fill="#5f8fd0"/>
<path d="M57.6 193.8 V191.8 H61.6 V194.6" fill="none" stroke="#48a83a" stroke-width="1"/>
<path d="M60.2 190.6 L62.4 191.8 L60.8 193.2" fill="none" stroke="#48a83a" stroke-width="0.8"/>
<line x1="68.4" y1="190.5" x2="68.4" y2="205" stroke="#d0d0d0"/>
<path d="M114 195.2 h4 l-2 2 z" fill="#2e3440"/>
<line x1="124.4" y1="190.5" x2="124.4" y2="205" stroke="#d0d0d0"/>
<rect x="129.6" y="191.3" width="8.2" height="9" fill="#f4f6fb" stroke="#9aa8d0" stroke-width="0.8"/>
<rect x="132.4" y="194.1" width="7.5" height="7.8" rx="1" fill="#3b4866"/>
<rect x="134" y="195.2" width="4.3" height="2.8" fill="#ffffff"/>
<rect x="134" y="199" width="4.3" height="2.4" fill="#8db4e0"/>
<path d="M147.1 195.2 h4 l-2 2 z" fill="#2e3440"/>
<line x1="156.4" y1="190.5" x2="156.4" y2="205" stroke="#d0d0d0"/>
<rect x="163.4" y="191.3" width="7.3" height="8.6" fill="#f7f9fd" stroke="#7b9bd0" stroke-width="0.8"/>
<line x1="168" y1="197.4" x2="164.6" y2="200.8" stroke="#e09a3a" stroke-width="1.3"/>
<circle cx="169.6" cy="195.3" r="2.2" fill="#dff0fa" stroke="#707a88" stroke-width="0.9"/>
</g>
<!-- filter row -->
<path d="M31.2 226 H35.2 L33.2 229.8 Z" fill="#222"/>
<rect x="33" y="225.5" width="0.1" height="0.1" fill="none"/>
<text x="41.3" y="230" font-size="4.5" fill="#999" font-family="Liberation Sans">a</text>
<rect x="43.8" y="224.2" width="5" height="7.3" rx="0.8" fill="#3cb44a"/>
<rect x="45.4" y="226" width="1.8" height="3.7" fill="#c9f2cc"/>
<text x="49" y="230" font-size="4.5" fill="#999" font-family="Liberation Sans">c</text>
<text x="86.5" y="230" font-size="4.5" fill="#999" font-family="Liberation Sans">a</text>
<rect x="89" y="224.2" width="5" height="7.3" rx="0.8" fill="#3cb44a"/>
<rect x="90.6" y="226" width="1.8" height="3.7" fill="#c9f2cc"/>
<text x="94.2" y="230" font-size="4.5" fill="#999" font-family="Liberation Sans">c</text>
<text x="375.5" y="230" font-size="4.5" fill="#999" font-family="Liberation Sans">a</text>
<rect x="378" y="224.2" width="5" height="7.3" rx="0.8" fill="#3cb44a"/>
<rect x="379.6" y="226" width="1.8" height="3.7" fill="#c9f2cc"/>
<text x="383.2" y="230" font-size="4.5" fill="#999" font-family="Liberation Sans">c</text>
<line x1="166.3" y1="227.8" x2="173.3" y2="227.8" stroke="#888" stroke-width="1"/>
<line x1="230" y1="227.8" x2="237" y2="227.8" stroke="#888" stroke-width="1"/>
<line x1="325" y1="227.8" x2="332" y2="227.8" stroke="#888" stroke-width="1"/>
<!-- row indicator -->
<path d="M32.2 239.3 L34.8 242 L32.2 244.7 Z" fill="#111"/>
</svg>
<svg class="a" style="left:0;top:0" width="900" height="534" viewBox="0 0 900 534" font-family="Liberation Sans" font-size="7">
<rect x="478.5" y="215.5" width="226" height="258.20" fill="#fff" stroke="#d4d4d4" stroke-width="1"/>
<line x1="478.5" y1="473.70" x2="704.5" y2="473.70" stroke="#e3e3e3" stroke-width="1"/>
<line x1="478.5" y1="451.10" x2="704.5" y2="451.10" stroke="#e3e3e3" stroke-width="1"/>
<line x1="478.5" y1="428.50" x2="704.5" y2="428.50" stroke="#e3e3e3" stroke-width="1"/>
<line x1="478.5" y1="405.90" x2="704.5" y2="405.90" stroke="#e3e3e3" stroke-width="1"/>
<line x1="478.5" y1="383.30" x2="704.5" y2="383.30" stroke="#e3e3e3" stroke-width="1"/>
<line x1="478.5" y1="360.70" x2="704.5" y2="360.70" stroke="#e3e3e3" stroke-width="1"/>
<line x1="478.5" y1="338.10" x2="704.5" y2="338.10" stroke="#e3e3e3" stroke-width="1"/>
<line x1="478.5" y1="315.50" x2="704.5" y2="315.50" stroke="#e3e3e3" stroke-width="1"/>
<line x1="478.5" y1="292.90" x2="704.5" y2="292.90" stroke="#e3e3e3" stroke-width="1"/>
<line x1="478.5" y1="270.30" x2="704.5" y2="270.30" stroke="#e3e3e3" stroke-width="1"/>
<line x1="478.5" y1="247.70" x2="704.5" y2="247.70" stroke="#e3e3e3" stroke-width="1"/>
<line x1="478.5" y1="225.10" x2="704.5" y2="225.10" stroke="#e3e3e3" stroke-width="1"/>
<polygon points="484.30,382.67 495.54,242.22 506.78,243.24 518.02,244.07 529.26,240.00 540.50,255.58 551.74,246.02 562.98,252.43 574.22,244.97 585.46,238.34 596.70,244.56 607.94,252.82 619.18,246.12 630.42,246.80 641.66,248.61 652.90,249.57 664.14,250.93 675.38,254.80 686.62,259.30 697.86,251.90 697.86,473.70 484.30,473.70" fill="#8064a2"/>
<polygon points="484.30,405.00 495.54,300.70 506.78,302.00 518.02,295.90 529.26,296.90 540.50,306.50 551.74,300.70 562.98,309.20 574.22,298.50 585.46,294.80 596.70,301.20 607.94,308.70 619.18,298.00 630.42,302.80 641.66,305.50 652.90,300.70 664.14,304.70 675.38,305.50 686.62,315.30 697.86,304.90 697.86,473.70 484.30,473.70" fill="#9bbb59"/>
<polygon points="484.30,428.00 495.54,358.10 506.78,360.00 518.02,351.20 529.26,358.10 540.50,364.50 551.74,356.80 562.98,361.90 574.22,359.20 585.46,356.00 596.70,360.00 607.94,360.80 619.18,355.20 630.42,362.70 641.66,360.80 652.90,352.80 664.14,364.80 675.38,365.90 686.62,362.70 697.86,369.90 697.86,473.70 484.30,473.70" fill="#c0504d"/>
<polygon points="484.30,449.30 495.54,418.70 506.78,415.20 518.02,411.50 529.26,418.10 540.50,420.00 551.74,416.80 562.98,422.70 574.22,413.30 585.46,414.70 596.70,419.50 607.94,420.50 619.18,414.70 630.42,413.90 641.66,414.70 652.90,411.50 664.14,417.30 675.38,422.10 686.62,414.70 697.86,421.30 697.86,473.70 484.30,473.70" fill="#4f81bd"/>
<line x1="478.5" y1="215" x2="478.5" y2="474.20" stroke="#b8b8b8" stroke-width="1"/>
<line x1="478" y1="473.70" x2="704.5" y2="473.70" stroke="#b8b8b8" stroke-width="1"/>
<line x1="474.5" y1="473.70" x2="478.5" y2="473.70" stroke="#a0a0a0" stroke-width="0.8"/>
<line x1="476.5" y1="466.17" x2="478.5" y2="466.17" stroke="#b0b0b0" stroke-width="0.7"/>
<line x1="476.5" y1="458.63" x2="478.5" y2="458.63" stroke="#b0b0b0" stroke-width="0.7"/>
<text x="470.8" y="476.30" text-anchor="end" fill="#333">0</text>
<line x1="474.5" y1="451.10" x2="478.5" y2="451.10" stroke="#a0a0a0" stroke-width="0.8"/>
<line x1="476.5" y1="443.57" x2="478.5" y2="443.57" stroke="#b0b0b0" stroke-width="0.7"/>
<line x1="476.5" y1="436.03" x2="478.5" y2="436.03" stroke="#b0b0b0" stroke-width="0.7"/>
<text x="470.8" y="453.70" text-anchor="end" fill="#333">100</text>
<line x1="474.5" y1="428.50" x2="478.5" y2="428.50" stroke="#a0a0a0" stroke-width="0.8"/>
<line x1="476.5" y1="420.97" x2="478.5" y2="420.97" stroke="#b0b0b0" stroke-width="0.7"/>
<line x1="476.5" y1="413.43" x2="478.5" y2="413.43" stroke="#b0b0b0" stroke-width="0.7"/>
<text x="470.8" y="431.10" text-anchor="end" fill="#333">200</text>
<line x1="474.5" y1="405.90" x2="478.5" y2="405.90" stroke="#a0a0a0" stroke-width="0.8"/>
<line x1="476.5" y1="398.37" x2="478.5" y2="398.37" stroke="#b0b0b0" stroke-width="0.7"/>
<line x1="476.5" y1="390.83" x2="478.5" y2="390.83" stroke="#b0b0b0" stroke-width="0.7"/>
<text x="470.8" y="408.50" text-anchor="end" fill="#333">300</text>
<line x1="474.5" y1="383.30" x2="478.5" y2="383.30" stroke="#a0a0a0" stroke-width="0.8"/>
<line x1="476.5" y1="375.77" x2="478.5" y2="375.77" stroke="#b0b0b0" stroke-width="0.7"/>
<line x1="476.5" y1="368.23" x2="478.5" y2="368.23" stroke="#b0b0b0" stroke-width="0.7"/>
<text x="470.8" y="385.90" text-anchor="end" fill="#333">400</text>
<line x1="474.5" y1="360.70" x2="478.5" y2="360.70" stroke="#a0a0a0" stroke-width="0.8"/>
<line x1="476.5" y1="353.17" x2="478.5" y2="353.17" stroke="#b0b0b0" stroke-width="0.7"/>
<line x1="476.5" y1="345.63" x2="478.5" y2="345.63" stroke="#b0b0b0" stroke-width="0.7"/>
<text x="470.8" y="363.30" text-anchor="end" fill="#333">500</text>
<line x1="474.5" y1="338.10" x2="478.5" y2="338.10" stroke="#a0a0a0" stroke-width="0.8"/>
<line x1="476.5" y1="330.57" x2="478.5" y2="330.57" stroke="#b0b0b0" stroke-width="0.7"/>
<line x1="476.5" y1="323.03" x2="478.5" y2="323.03" stroke="#b0b0b0" stroke-width="0.7"/>
<text x="470.8" y="340.70" text-anchor="end" fill="#333">600</text>
<line x1="474.5" y1="315.50" x2="478.5" y2="315.50" stroke="#a0a0a0" stroke-width="0.8"/>
<line x1="476.5" y1="307.97" x2="478.5" y2="307.97" stroke="#b0b0b0" stroke-width="0.7"/>
<line x1="476.5" y1="300.43" x2="478.5" y2="300.43" stroke="#b0b0b0" stroke-width="0.7"/>
<text x="470.8" y="318.10" text-anchor="end" fill="#333">700</text>
<line x1="474.5" y1="292.90" x2="478.5" y2="292.90" stroke="#a0a0a0" stroke-width="0.8"/>
<line x1="476.5" y1="285.37" x2="478.5" y2="285.37" stroke="#b0b0b0" stroke-width="0.7"/>
<line x1="476.5" y1="277.83" x2="478.5" y2="277.83" stroke="#b0b0b0" stroke-width="0.7"/>
<text x="470.8" y="295.50" text-anchor="end" fill="#333">800</text>
<line x1="474.5" y1="270.30" x2="478.5" y2="270.30" stroke="#a0a0a0" stroke-width="0.8"/>
<line x1="476.5" y1="262.77" x2="478.5" y2="262.77" stroke="#b0b0b0" stroke-width="0.7"/>
<line x1="476.5" y1="255.23" x2="478.5" y2="255.23" stroke="#b0b0b0" stroke-width="0.7"/>
<text x="470.8" y="272.90" text-anchor="end" fill="#333">900</text>
<line x1="474.5" y1="247.70" x2="478.5" y2="247.70" stroke="#a0a0a0" stroke-width="0.8"/>
<line x1="476.5" y1="240.17" x2="478.5" y2="240.17" stroke="#b0b0b0" stroke-width="0.7"/>
<line x1="476.5" y1="232.63" x2="478.5" y2="232.63" stroke="#b0b0b0" stroke-width="0.7"/>
<text x="470.8" y="250.30" text-anchor="end" fill="#333">1000</text>
<line x1="474.5" y1="225.10" x2="478.5" y2="225.10" stroke="#a0a0a0" stroke-width="0.8"/>
<text x="470.8" y="227.70" text-anchor="end" fill="#333">1100</text>
<line x1="484.30" y1="473.70" x2="484.30" y2="477.20" stroke="#a0a0a0" stroke-width="0.8"/>
<line x1="491.04" y1="473.70" x2="491.04" y2="475.70" stroke="#b0b0b0" stroke-width="0.7"/>
<line x1="497.79" y1="473.70" x2="497.79" y2="475.70" stroke="#b0b0b0" stroke-width="0.7"/>
<line x1="504.53" y1="473.70" x2="504.53" y2="475.70" stroke="#b0b0b0" stroke-width="0.7"/>
<line x1="511.28" y1="473.70" x2="511.28" y2="475.70" stroke="#b0b0b0" stroke-width="0.7"/>
<text x="484.30" y="486.50" text-anchor="middle" fill="#333">2000</text>
<line x1="518.02" y1="473.70" x2="518.02" y2="477.20" stroke="#a0a0a0" stroke-width="0.8"/>
<line x1="524.76" y1="473.70" x2="524.76" y2="475.70" stroke="#b0b0b0" stroke-width="0.7"/>
<line x1="531.51" y1="473.70" x2="531.51" y2="475.70" stroke="#b0b0b0" stroke-width="0.7"/>
<line x1="538.25" y1="473.70" x2="538.25" y2="475.70" stroke="#b0b0b0" stroke-width="0.7"/>
<line x1="545.00" y1="473.70" x2="545.00" y2="475.70" stroke="#b0b0b0" stroke-width="0.7"/>
<text x="518.02" y="486.50" text-anchor="middle" fill="#333">2003</text>
<line x1="551.74" y1="473.70" x2="551.74" y2="477.20" stroke="#a0a0a0" stroke-width="0.8"/>
<line x1="558.48" y1="473.70" x2="558.48" y2="475.70" stroke="#b0b0b0" stroke-width="0.7"/>
<line x1="565.23" y1="473.70" x2="565.23" y2="475.70" stroke="#b0b0b0" stroke-width="0.7"/>
<line x1="571.97" y1="473.70" x2="571.97" y2="475.70" stroke="#b0b0b0" stroke-width="0.7"/>
<line x1="578.72" y1="473.70" x2="578.72" y2="475.70" stroke="#b0b0b0" stroke-width="0.7"/>
<text x="551.74" y="486.50" text-anchor="middle" fill="#333">2006</text>
<line x1="585.46" y1="473.70" x2="585.46" y2="477.20" stroke="#a0a0a0" stroke-width="0.8"/>
<line x1="592.20" y1="473.70" x2="592.20" y2="475.70" stroke="#b0b0b0" stroke-width="0.7"/>
<line x1="598.95" y1="473.70" x2="598.95" y2="475.70" stroke="#b0b0b0" stroke-width="0.7"/>
<line x1="605.69" y1="473.70" x2="605.69" y2="475.70" stroke="#b0b0b0" stroke-width="0.7"/>
<line x1="612.44" y1="473.70" x2="612.44" y2="475.70" stroke="#b0b0b0" stroke-width="0.7"/>
<text x="585.46" y="486.50" text-anchor="middle" fill="#333">2009</text>
<line x1="619.18" y1="473.70" x2="619.18" y2="477.20" stroke="#a0a0a0" stroke-width="0.8"/>
<line x1="625.92" y1="473.70" x2="625.92" y2="475.70" stroke="#b0b0b0" stroke-width="0.7"/>
<line x1="632.67" y1="473.70" x2="632.67" y2="475.70" stroke="#b0b0b0" stroke-width="0.7"/>
<line x1="639.41" y1="473.70" x2="639.41" y2="475.70" stroke="#b0b0b0" stroke-width="0.7"/>
<line x1="646.16" y1="473.70" x2="646.16" y2="475.70" stroke="#b0b0b0" stroke-width="0.7"/>
<text x="619.18" y="486.50" text-anchor="middle" fill="#333">2012</text>
<line x1="652.90" y1="473.70" x2="652.90" y2="477.20" stroke="#a0a0a0" stroke-width="0.8"/>
<line x1="659.64" y1="473.70" x2="659.64" y2="475.70" stroke="#b0b0b0" stroke-width="0.7"/>
<line x1="666.39" y1="473.70" x2="666.39" y2="475.70" stroke="#b0b0b0" stroke-width="0.7"/>
<line x1="673.13" y1="473.70" x2="673.13" y2="475.70" stroke="#b0b0b0" stroke-width="0.7"/>
<line x1="679.88" y1="473.70" x2="679.88" y2="475.70" stroke="#b0b0b0" stroke-width="0.7"/>
<text x="652.90" y="486.50" text-anchor="middle" fill="#333">2015</text>
<line x1="686.62" y1="473.70" x2="686.62" y2="477.20" stroke="#a0a0a0" stroke-width="0.8"/>
<line x1="693.36" y1="473.70" x2="693.36" y2="475.70" stroke="#b0b0b0" stroke-width="0.7"/>
<line x1="700.11" y1="473.70" x2="700.11" y2="475.70" stroke="#b0b0b0" stroke-width="0.7"/>
<text x="686.62" y="486.50" text-anchor="middle" fill="#333">2018</text>
<polyline points="484.30,382.67 495.54,242.22 506.78,243.24 518.02,244.07 529.26,240.00 540.50,255.58 551.74,246.02 562.98,252.43 574.22,244.97 585.46,238.33 596.70,241.19 607.94,256.21 619.18,246.12 630.42,246.80 641.66,248.61 652.90,249.57 664.14,250.93 675.38,254.80 686.62,248.70 697.86,263.30" fill="none" stroke="#000" stroke-width="1.4" stroke-linejoin="round"/>
<circle cx="484.30" cy="382.67" r="3.4" fill="#000"/>
<circle cx="495.54" cy="242.22" r="3.4" fill="#000"/>
<circle cx="506.78" cy="243.24" r="3.4" fill="#000"/>
<circle cx="518.02" cy="244.07" r="3.4" fill="#000"/>
<circle cx="529.26" cy="240.00" r="3.4" fill="#000"/>
<circle cx="540.50" cy="255.58" r="3.4" fill="#000"/>
<circle cx="551.74" cy="246.02" r="3.4" fill="#000"/>
<circle cx="562.98" cy="252.43" r="3.4" fill="#000"/>
<circle cx="574.22" cy="244.97" r="3.4" fill="#000"/>
<circle cx="585.46" cy="238.33" r="3.4" fill="#000"/>
<circle cx="596.70" cy="241.19" r="3.4" fill="#000"/>
<circle cx="607.94" cy="256.21" r="3.4" fill="#000"/>
<circle cx="619.18" cy="246.12" r="3.4" fill="#000"/>
<circle cx="630.42" cy="246.80" r="3.4" fill="#000"/>
<circle cx="641.66" cy="248.61" r="3.4" fill="#000"/>
<circle cx="652.90" cy="249.57" r="3.4" fill="#000"/>
<circle cx="664.14" cy="250.93" r="3.4" fill="#000"/>
<circle cx="675.38" cy="254.80" r="3.4" fill="#000"/>
<circle cx="686.62" cy="248.70" r="3.4" fill="#000"/>
<circle cx="697.86" cy="263.30" r="3.4" fill="#000"/>
<rect x="711.5" y="215" width="141" height="60.5" fill="#fff" stroke="#cdcdcd" stroke-width="1"/>
<path d="M713.3 227.20 L719.8 217.00 L726.3 227.20 Z" fill="#4f81bd"/>
<text x="728.4" y="224.90" fill="#222" font-size="7.8" textLength="121.3" lengthAdjust="spacingAndGlyphs" stroke="#222" stroke-width="0.1">Zähler: 123000104 TO: [00036] Kind3</text>
<path d="M713.3 238.80 L719.8 228.60 L726.3 238.80 Z" fill="#c0504d"/>
<text x="728.4" y="236.50" fill="#222" font-size="7.8" textLength="121.3" lengthAdjust="spacingAndGlyphs" stroke="#222" stroke-width="0.1">Zähler: 123000105 TO: [00037] Kind4</text>
<path d="M713.3 250.50 L719.8 240.30 L726.3 250.50 Z" fill="#9bbb59"/>
<text x="728.4" y="248.20" fill="#222" font-size="7.8" textLength="121.3" lengthAdjust="spacingAndGlyphs" stroke="#222" stroke-width="0.1">Zähler: 123000102 TO: [00034] Kind1</text>
<path d="M713.3 262.10 L719.8 251.90 L726.3 262.10 Z" fill="#8064a2"/>
<text x="728.4" y="259.80" fill="#222" font-size="7.8" textLength="121.3" lengthAdjust="spacingAndGlyphs" stroke="#222" stroke-width="0.1">Zähler: 123000103 TO: [00035] Kind2</text>
<line x1="713.3" y1="268.6" x2="726.3" y2="268.6" stroke="#000" stroke-width="1.2"/>
<circle cx="720" cy="268.6" r="3.2" fill="#000"/>
<text x="728.4" y="271.3" fill="#222" font-size="7.8" textLength="39.2" lengthAdjust="spacingAndGlyphs" stroke="#222" stroke-width="0.1">Hauptzähler</text>
</svg>
<div class="a" style="left:5px;top:509px;width:890px;height:20.3px;background:#f0f0f0;border-top:1px solid #d9d9d9"></div>
<div class="a" style="left:85.0px;top:513.7px;width:1px;height:13px;background:#d2d2d2"></div>
<div class="a" style="left:220.6px;top:513.7px;width:1px;height:13px;background:#d2d2d2"></div>
<div class="a" style="left:281.3px;top:513.7px;width:1px;height:13px;background:#d2d2d2"></div>
<div class="a" style="left:377.7px;top:513.7px;width:1px;height:13px;background:#d2d2d2"></div>
<div class="t" style="left:9.80px;top:515.30px;font-size:7.8px;color:#1e1e1e;transform:scaleX(1.0199)">Hauptbenutzer: mjn</div>
<div class="t" style="left:91.80px;top:515.30px;font-size:7.8px;color:#1e1e1e;transform:scaleX(0.9788)">gekoppelt (iX-Haus Benutzer Nr. 48)</div>
<div class="t" style="left:227.10px;top:515.30px;font-size:7.8px;color:#1e1e1e;transform:scaleX(0.9075)">Lizenz: 999999</div>
<div class="t" style="left:287.80px;top:515.30px;font-size:7.8px;color:#1e1e1e;transform:scaleX(0.9163)">Version: 20.17.8 (DEBUG)</div>
<svg class="a" style="left:889px;top:520px" width="8" height="8" viewBox="0 0 8 8"><g fill="#b5b5b5"><rect x="5" y="1" width="1" height="1"/><rect x="3" y="3" width="1" height="1"/><rect x="5" y="3" width="1" height="1"/><rect x="1" y="5" width="1" height="1"/><rect x="3" y="5" width="1" height="1"/><rect x="5" y="5" width="1" height="1"/></g></svg>
</body></html>
